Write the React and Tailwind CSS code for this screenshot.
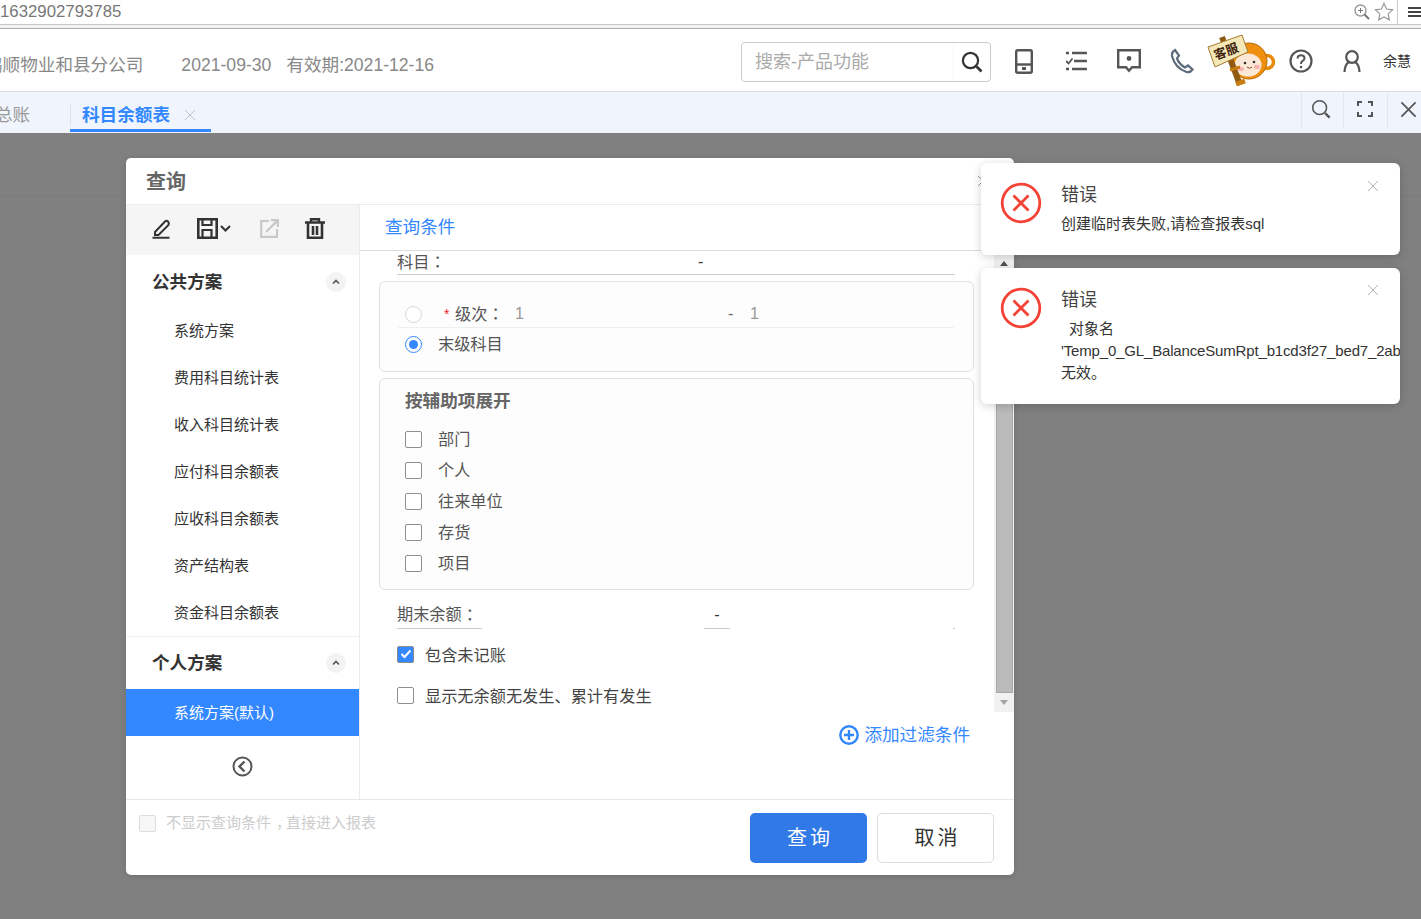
import React from "react";

const FONT = { fontFamily: '"Liberation Sans","Noto Sans CJK SC",sans-serif' };

const P = ({ children }) => <span className="font-['Noto_Sans_CJK_TC']">{children}</span>;

const Check = ({ checked, disabled }) => (
  <span className={`inline-flex items-center justify-center w-[17px] h-[17px] rounded-[2px] border shrink-0 ${checked ? "bg-[#3388ff] border-[#8a8a8a]" : disabled ? "bg-[#f7f7f7] border-[#dddddd]" : "bg-white border-[#8f8f8f]"}`}>
    {checked && (
      <svg width="12" height="10" viewBox="0 0 12 10"><path d="M1.5 5 4.5 8 10.5 1.5" fill="none" stroke="#fff" strokeWidth="2" /></svg>
    )}
  </span>
);

const Radio = ({ on }) => (
  <span className={`inline-flex items-center justify-center w-[17px] h-[17px] rounded-full border shrink-0 bg-white ${on ? "border-[#3388ff]" : "border-[#d5d5d5]"}`}>
    {on && <span className="w-[9px] h-[9px] rounded-full bg-[#3388ff]" />}
  </span>
);

const Chevron = () => (
  <span className="w-5 h-5 rounded-full bg-[#f3f3f3] flex items-center justify-center">
    <svg width="8" height="6" viewBox="0 0 8 6"><path d="M1 4.5 4 1.5 7 4.5" fill="none" stroke="#555" strokeWidth="1.6" /></svg>
  </span>
);

const SearchIcon = ({ size = 22, color = "#333", w = 2.2 }) => (
  <svg width={size} height={size} viewBox="0 0 22 22">
    <circle cx="9.5" cy="9.5" r="7.6" fill="none" stroke={color} strokeWidth={w} />
    <path d="M15.500 15.500 20.500 20.500" stroke={color} strokeWidth="2.6" />
  </svg>
);

const XIcon = ({ size = 12, color = "#b5b5b5", w = 1 }) => (
  <svg width={size} height={size} viewBox="0 0 12 12"><path d="M1 1 11 11M11 1 1 11" stroke={color} strokeWidth={w} fill="none" /></svg>
);

const Monkey = () => (
  <svg width="70" height="54" viewBox="0 0 70 54" className="shrink-0">
    <circle cx="60" cy="28" r="6.500" fill="#fff" stroke="#e88a0c" strokeWidth="3.500" />
    <circle cx="42" cy="27" r="18" fill="#ef8f10" stroke="#b76a08" strokeWidth="1" />
    <ellipse cx="41" cy="31" rx="13.500" ry="11.500" fill="#fbe8d6" />
    <circle cx="38" cy="29" r="1.300" fill="#333" />
    <circle cx="47" cy="28" r="1.300" fill="#333" />
    <ellipse cx="34" cy="35" rx="3" ry="2.200" fill="#f7b3b0" />
    <ellipse cx="50" cy="33" rx="3" ry="2.200" fill="#f7b3b0" />
    <path d="M40 33q2.500 2.500 5 0" fill="none" stroke="#7a4a20" strokeWidth="1" />
    <path d="M15 3 33 51" stroke="#8e5a14" strokeWidth="6" />
    <path d="M29 50 38 47" stroke="#c77c10" strokeWidth="5" />
    <path d="M23 36 33 33" stroke="#c77c10" strokeWidth="3" />
    <path d="M1 13 35 1 41 18 8 33Z" fill="#f5e8b8" stroke="#a57a30" strokeWidth="1" />
    <text x="0" y="0" transform="translate(9 26) rotate(-21)" fontSize="12.500" fontWeight="700" fill="#3f2410" style={FONT}>客服</text>
  </svg>
);

const Toast = ({ h, closeTop, children }) => (
  <div className={`relative flex bg-white rounded-[6px] shadow-[0_2px_10px_rgba(0,0,0,0.18)] overflow-hidden ${h}`}>
    <div className="w-[80px] shrink-0 pl-[19px] pt-[19px]">
      <svg width="42" height="42" viewBox="0 0 42 42">
        <circle cx="21" cy="21" r="18.8" fill="none" stroke="#f44336" strokeWidth="2.8" />
        <path d="M13.5 13.5 28.5 28.5M28.5 13.5 13.5 28.5" stroke="#f44336" strokeWidth="2.8" />
      </svg>
    </div>
    <div className="pt-[21px] text-[#333] min-w-0">
      <div className="text-[18px] leading-[22px] text-[#444]">错误</div>
      {children}
    </div>
    <button className={`absolute right-[21px] ${closeTop}`}><XIcon /></button>
  </div>
);

const sideItems = ["系统方案", "费用科目统计表", "收入科目统计表", "应付科目余额表", "应收科目余额表", "资产结构表", "资金科目余额表"];
const auxItems = ["部门", "个人", "往来单位", "存货", "项目"];

export default function App() {
  return (
    <div className="relative w-[1421px] h-[919px] overflow-hidden bg-[#808080]" style={FONT}>
      {/* browser bar */}
      <div className="h-[24px] bg-white flex items-center border-b border-[#c8c8c8] box-content">
        <span className="text-[16.8px] leading-[22px] text-[#777] flex-1">1632902793785</span>
        <svg width="16" height="16" viewBox="0 0 16 16" className="mr-[4px]">
          <circle cx="6.5" cy="6.5" r="5.5" fill="none" stroke="#999" strokeWidth="1.4" />
          <path d="M4 6.5h5M6.5 4v5" stroke="#777" strokeWidth="1" />
          <path d="M10.5 10.5 15 15" stroke="#777" strokeWidth="2" />
        </svg>
        <svg width="20" height="20" viewBox="0 0 20 20" className="mr-[3px]">
          <path d="M10 1.5 12.6 7l6 .8-4.4 4.1 1.1 6L10 15l-5.300 2.900 1.100-6L1.400 7.800l6-.8Z" fill="none" stroke="#999" strokeWidth="1.200" />
        </svg>
        <div className="w-[24px] h-[24px] border-l border-[#c8c8c8] pl-[10px] flex flex-col justify-center gap-[2px] overflow-hidden">
          <span className="block h-[2px] w-[14px] bg-[#444] shrink-0" />
          <span className="block h-[2px] w-[14px] bg-[#444] shrink-0" />
          <span className="block h-[2px] w-[14px] bg-[#444] shrink-0" />
        </div>
      </div>
      <div className="h-[3px] bg-[#f4f4f4] border-b border-[#aaaaaa] box-content" />

      {/* header */}
      <div className="h-[62px] bg-white border-b border-[#dddddd] box-content flex items-center overflow-hidden">
        <span className="ml-[-15px] text-[17.6px] text-[#888] whitespace-nowrap mt-[11px]">鹏顺物业和县分公司</span>
        <span className="ml-[38px] text-[17.6px] text-[#888] whitespace-nowrap mt-[11px]">2021-09-30</span>
        <span className="ml-[15px] text-[17.6px] text-[#888] whitespace-nowrap mt-[11px]">有效期:2021-12-16</span>
        <div className="ml-[307px] w-[250px] h-[40px] border border-[#cccccc] rounded-[4px] flex items-center mt-[4px] shrink-0">
          <span className="flex-1 pl-[13px] text-[18px] text-[#aaa]">搜索-产品功能</span>
          <span className="w-[37px] h-full border-l border-[#f8f8f8] flex items-center justify-center"><SearchIcon /></span>
        </div>
        <div className="flex items-center ml-[24px] mt-[2px] shrink-0">
          <svg width="18" height="25" viewBox="0 0 18 25">
            <rect x="1.200" y="1.200" width="15.600" height="22.600" rx="1.500" fill="none" stroke="#555" strokeWidth="2.400" />
            <path d="M1 15.500h16" stroke="#555" strokeWidth="2.400" />
            <rect x="7" y="18" width="4" height="3" fill="#555" />
          </svg>
          <svg width="22" height="20" viewBox="0 0 22 20" className="ml-[33px]">
            <path d="M0 2h3M6 2h15M8 10h13M0 18h3M6 18h15" stroke="#555" strokeWidth="2.400" />
            <path d="M0 10 2.500 12.500 6.500 7.500" fill="none" stroke="#555" strokeWidth="1.800" />
          </svg>
          <svg width="24" height="24" viewBox="0 0 24 24" className="ml-[29px]">
            <path d="M1.200 1.200h21.600v17H15l-3 3.500-3-3.500H1.200Z" fill="none" stroke="#555" strokeWidth="2.400" />
            <circle cx="12" cy="9.500" r="2.400" fill="#555" />
          </svg>
          <svg width="24" height="26" viewBox="0 0 24 26" className="ml-[29px]">
            <path d="M5 2 9 7.500 7 10.500Q9 16 15 19.500L18 17.500 22.500 21.500Q20 25 16.500 24 5 20 2 8 1.500 4 5 2Z" fill="none" stroke="#5d6b7a" strokeWidth="2.200" />
          </svg>
          <div className="ml-[13px]"><Monkey /></div>
          <svg width="24" height="24" viewBox="0 0 24 24" className="ml-[12px]">
            <circle cx="12" cy="12" r="10.500" fill="none" stroke="#555" strokeWidth="2.200" />
            <path d="M8.500 9.500Q8.700 6.300 12 6.300 15.500 6.300 15.500 9.200 15.500 11 13.500 12 12 12.800 12 15" fill="none" stroke="#555" strokeWidth="2" />
            <circle cx="12" cy="18" r="1.300" fill="#555" />
          </svg>
          <svg width="20" height="24" viewBox="0 0 20 24" className="ml-[29px]">
            <circle cx="10" cy="8" r="5.800" fill="none" stroke="#555" strokeWidth="2.200" />
            <path d="M2.500 23Q3 15 7 13M17.500 23Q17 15 13 13" fill="none" stroke="#555" strokeWidth="2.200" />
          </svg>
          <span className="ml-[21px] text-[14px] text-[#333] whitespace-nowrap">余慧</span>
        </div>
      </div>

      {/* tabs */}
      <div className="h-[41px] bg-[#f0f5fd] flex items-stretch overflow-hidden">
        <div className="w-[70px] flex items-center text-[17.6px] text-[#999] overflow-hidden shrink-0">
          <span className="ml-[-5px] mt-[5px] whitespace-nowrap">总账</span>
        </div>
        <div className="relative w-[141px] h-[40px] flex items-center pl-[12px] border-b-[3px] border-[#3388ff]">
          <span className="absolute left-0 top-[11px] h-[22px] w-px bg-[#dfe4ec]" />
          <span className="text-[17.6px] font-bold text-[#3388ff] whitespace-nowrap mt-[9px]">科目余额表</span>
          <span className="ml-[14px] mt-[8px]"><XIcon color="#c4c4c4" /></span>
        </div>
        <div className="flex-1" />
        <div className="flex items-center w-[42px] h-[36px] justify-center border-l border-[#e2e6ee] pb-[2px] pr-[4px]"><SearchIcon size={20} color="#555" w={1.7} /></div>
        <div className="flex items-center w-[44px] h-[36px] justify-center border-l border-[#e2e6ee] pb-[2px] pr-[2px]">
          <svg width="16" height="16" viewBox="0 0 16 16"><path d="M1 5V1h4M11 1h4v4M15 11v4h-4M5 15H1v-4" fill="none" stroke="#555" strokeWidth="2" /></svg>
        </div>
        <div className="flex items-center w-[34px] h-[36px] justify-center border-l border-[#e2e6ee] pb-[2px] pl-[7px]"><XIcon size={17} color="#555" w={1.2} /></div>
      </div>

      {/* dimmed page content */}
      <div className="h-[64px] border-b border-[#7c7c7c]" />

      {/* modal */}
      <div className="absolute left-[126px] top-[158px] w-[888px] h-[717px] bg-white rounded-[5px] shadow-[0_1px_6px_rgba(0,0,0,0.15)] flex flex-col overflow-hidden">
        <div className="h-[47px] shrink-0 border-b border-[#ececec] flex items-center pl-[20px] justify-between">
          <span className="text-[20px] font-bold text-[#666] mt-[2px]">查询</span>
          <span className="mr-[25px]"><XIcon color="#999" /></span>
        </div>
        <div className="flex flex-1 min-h-0">
          {/* sidebar */}
          <div className="w-[234px] shrink-0 border-r border-[#ececec] flex flex-col">
            <div className="h-[50px] bg-[#f5f5f5] flex items-center pl-[26px] pb-[4px] shrink-0">
              <svg width="20" height="21" viewBox="0 0 20 21">
                <path d="M3 14 13 3.500Q14.500 2 16 3.500T16.500 7L6.500 17H3Z" fill="none" stroke="#333" strokeWidth="2" />
                <path d="M0.500 19.800h17" stroke="#333" strokeWidth="2" />
              </svg>
              <svg width="21" height="21" viewBox="0 0 21 21" className="ml-[25px]">
                <path d="M1.300 1.300h18.400v18.400H1.300Z" fill="none" stroke="#333" strokeWidth="2.600" />
                <path d="M5.500 2v5h9V2M5.500 19v-7h9v7" fill="none" stroke="#333" strokeWidth="2.200" />
              </svg>
              <svg width="11" height="7" viewBox="0 0 11 7" className="ml-[2px]"><path d="M1 1 5.500 5.500 10 1" fill="none" stroke="#333" strokeWidth="2" /></svg>
              <svg width="19" height="19" viewBox="0 0 19 19" className="ml-[29px]">
                <path d="M9 2H1.200v15.800H17V10" fill="none" stroke="#c8c8c8" strokeWidth="2.200" />
                <path d="M6 13 17 2M11 1.200h6.800V8" fill="none" stroke="#c8c8c8" strokeWidth="2.200" />
              </svg>
              <svg width="20" height="21" viewBox="0 0 20 21" className="ml-[26px]">
                <path d="M0 4.500h20M6 4V1.200h8V4" fill="none" stroke="#333" strokeWidth="2.400" />
                <path d="M3 5v14.800h14V5M8 8v9M12 8v9" fill="none" stroke="#333" strokeWidth="2.600" />
              </svg>
            </div>
            <div className="h-[53px] shrink-0 flex items-center justify-between pl-[26px] pr-[13px]">
              <span className="text-[17.6px] font-bold text-[#333] mt-[1px]">公共方案</span>
              <Chevron />
            </div>
            {sideItems.map((t) => (
              <div key={t} className="h-[47px] shrink-0 flex items-center pl-[48px] text-[15px] text-[#333]">{t}</div>
            ))}
            <div className="h-[53px] shrink-0 flex items-center justify-between pl-[26px] pr-[13px] border-t border-[#f0f0f0] box-border mt-[-1px]">
              <span className="text-[17.6px] font-bold text-[#333] mt-[1px]">个人方案</span>
              <Chevron />
            </div>
            <div className="h-[47px] shrink-0 flex items-center pl-[48px] pt-[1px] text-[15px] text-white bg-[#3388ff]">系统方案(默认)</div>
            <div className="flex-1 flex items-center justify-center pb-[3px]">
              <svg width="21" height="21" viewBox="0 0 21 21">
                <circle cx="10.500" cy="10.500" r="9" fill="none" stroke="#555" strokeWidth="2" />
                <path d="M12.500 5.500 7.500 10.500 12.500 15.500" fill="none" stroke="#555" strokeWidth="2.400" />
              </svg>
            </div>
          </div>

          {/* main */}
          <div className="flex-1 min-w-0 flex flex-col">
            <div className="h-[46px] shrink-0 border-b border-[#dddddd] flex items-center pl-[25px]">
              <span className="text-[17.6px] text-[#3388ff]">查询条件</span>
            </div>
            <div className="h-[461px] shrink-0 flex overflow-hidden">
              <div className="w-[634px] shrink-0 pl-[19px] text-[16.2px] text-[#555]">
                <div className="ml-[18px] w-[558px] h-[24px] border-b border-[#cccccc] flex items-start">
                  <span className="w-[301px] leading-[20px]">科目<P>：</P></span>
                  <span className="text-[#333] leading-[20px]">-</span>
                </div>
                <div className="mt-[6px] w-[595px] h-[91px] border border-[#e0e0e0] rounded-[6px] bg-[#fdfdfd] pt-[19px] pl-[18px]">
                  <div className="w-[556px] h-[27px] border-b border-[#eeeeee] flex items-center pl-[7px]">
                    <Radio />
                    <span className="ml-[22px] text-[#f5222d] text-[14px] w-[11px]">*</span>
                    <span className="w-[60px] mb-[1px]">级次<P>：</P></span>
                    <span className="w-[213px] text-[#999] mb-[1px]">1</span>
                    <span className="w-[22px] text-[#666] mb-[1px]">-</span>
                    <span className="text-[#999] mb-[1px]">1</span>
                  </div>
                  <div className="h-[33px] flex items-center pl-[7px]">
                    <Radio on />
                    <span className="ml-[16px]">末级科目</span>
                  </div>
                </div>
                <div className="mt-[6px] w-[595px] h-[212px] border border-[#e0e0e0] rounded-[6px] bg-[#fdfdfd] pl-[25px] pt-[10px]">
                  <div className="text-[17.6px] font-bold text-[#666] leading-[24px]">按辅助项展开</div>
                  <div className="mt-[11px] flex flex-col">
                    {auxItems.map((t) => (
                      <div key={t} className="h-[31px] flex items-center">
                        <Check />
                        <span className="ml-[16px]">{t}</span>
                      </div>
                    ))}
                  </div>
                </div>
                <div className="mt-[11px] ml-[18px] h-[28px] flex">
                  <div className="w-[85px] border-b border-[#cccccc] flex items-center whitespace-nowrap text-[#555]">期末余额<P>：</P></div>
                  <div className="ml-[222px] w-[26px] border-b border-[#cccccc] flex items-center justify-center text-[#333]">-</div>
                  <div className="ml-[223px] w-[2px] border-b border-[#cccccc]" />
                </div>
                <div className="mt-[16px] ml-[18px] h-[18px] flex items-center">
                  <Check checked />
                  <span className="ml-[11px] text-[#444] mt-[2px]">包含未记账</span>
                </div>
                <div className="mt-[23px] ml-[18px] h-[18px] flex items-center">
                  <Check />
                  <span className="ml-[11px] text-[#444] whitespace-nowrap mt-[2px]">显示无余额无发生、累计有发生</span>
                </div>
              </div>
              {/* scrollbar */}
              <div className="w-[20px] mt-[4px] h-[457px] bg-[#f1f1f1] flex flex-col items-center shrink-0">
                <div className="h-[17px] flex items-center justify-center shrink-0">
                  <svg width="8" height="5" viewBox="0 0 8 5"><path d="M0 5 4 0 8 5Z" fill="#505050" /></svg>
                </div>
                <div className="w-[17px] flex-1 bg-[#bbbbbb] border border-[#a8a8a8]" />
                <div className="h-[19px] flex items-center justify-center shrink-0">
                  <svg width="8" height="5" viewBox="0 0 8 5"><path d="M0 0 4 5 8 0Z" fill="#a3a3a3" /></svg>
                </div>
              </div>
            </div>
            <div className="flex-1 flex justify-end items-start pt-[13px] pr-[44px]">
              <div className="flex items-center text-[17.6px] text-[#3388ff] leading-[20px]">
                <svg width="20" height="20" viewBox="0 0 20 20">
                  <circle cx="10" cy="10" r="8.700" fill="none" stroke="#3388ff" strokeWidth="2.400" />
                  <path d="M5 10h10M10 5v10" stroke="#3388ff" strokeWidth="2.400" />
                </svg>
                <span className="ml-[5px]">添加过滤条件</span>
              </div>
            </div>
          </div>
        </div>
        {/* footer */}
        <div className="h-[76px] shrink-0 border-t border-[#e8e8e8] flex items-start">
          <div className="ml-[13px] mt-[14px] h-[18px] flex items-center">
            <Check disabled />
            <span className="ml-[10px] mt-[1px] text-[15px] text-[#cccccc] whitespace-nowrap">不显示查询条件<span className="relative left-[5px]">，</span>直接进入报表</span>
          </div>
          <div className="ml-auto mr-[20px] mt-[13px] flex gap-[10px]">
            <button className="w-[117px] h-[50px] rounded-[5px] bg-[#3079e6] text-white text-[20px] tracking-[3px] pl-[3px]">查询</button>
            <button className="w-[117px] h-[50px] rounded-[5px] bg-white border border-[#dddddd] text-[#333] text-[20px] tracking-[3px] pl-[4px]">取消</button>
          </div>
        </div>
      </div>

      {/* notifications */}
      <div className="absolute left-[981px] top-[163px] w-[419px] flex flex-col gap-[13px]">
        <Toast h="h-[92px]" closeTop="top-[17px]">
          <div className="mt-[7px] text-[15px] leading-[22px] whitespace-nowrap">创建临时表失败,请检查报表sql</div>
        </Toast>
        <Toast h="h-[136px]" closeTop="top-[16px]">
          <div className="mt-[7px] text-[15px] leading-[22px] w-[339px]">
            <div className="pl-[8px]">对象名</div>
            <div className="whitespace-nowrap tracking-[-0.16px]">'Temp_0_GL_BalanceSumRpt_b1cd3f27_bed7_2ab</div>
            <div>无效。</div>
          </div>
        </Toast>
      </div>
    </div>
  );
}
